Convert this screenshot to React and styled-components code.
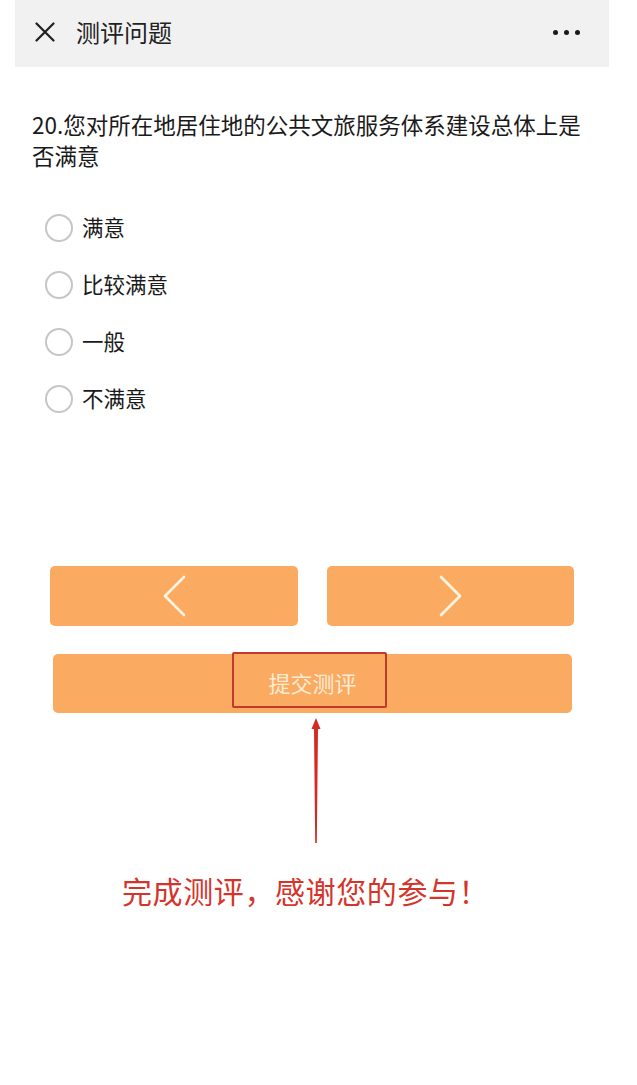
import React from 'react';
import styled, { createGlobalStyle } from 'styled-components';

const GlobalStyle = createGlobalStyle`
  html, body {
    margin: 0;
    padding: 0;
    background: #ffffff;
  }
  body {
    font-family: "Noto Sans CJK SC", "Noto Sans", sans-serif;
    color: #1c1c1c;
  }
`;

const Page = styled.div`
  width: 637px;
  min-height: 1085px;
  background: #fff;
`;

const TopBar = styled.div`
  margin: 0 28px 0 15px;
  height: 67px;
  background: #f1f1f1;
  display: flex;
  align-items: center;
  padding: 0 29px 3px 20px;
  box-sizing: border-box;
`;

const CloseIcon = styled.svg`
  width: 20px;
  height: 20px;
  flex-shrink: 0;
`;

const Title = styled.h1`
  margin: 0 0 0 21px;
  font-size: 24px;
  font-weight: 400;
  color: #222;
  line-height: 30px;
  flex: 1;
`;

const MoreDots = styled.div`
  display: flex;
  gap: 6px;
  span {
    width: 5px;
    height: 5px;
    border-radius: 50%;
    background: #1a1a1a;
  }
`;

const Question = styled.p`
  margin: 42px 0 0;
  padding: 0 45px 0 32px;
  font-size: 22.5px;
  line-height: 31px;
  color: #1a1a1a;
`;

const OptionList = styled.ul`
  list-style: none;
  margin: 28.5px 0 0;
  padding: 0 0 0 45px;
`;

const Option = styled.li`
  height: 57px;
  display: flex;
  align-items: center;
  gap: 9px;
  font-size: 21.5px;
  color: #1a1a1a;
  span:last-child {
    margin-top: -3px;
  }
`;

const Radio = styled.span`
  width: 28px;
  height: 28px;
  box-sizing: border-box;
  border: 2px solid #c6c6c6;
  border-radius: 50%;
  flex-shrink: 0;
`;

const NavRow = styled.div`
  margin: 138.5px 63px 0 50px;
  display: grid;
  grid-template-columns: 248px 247px;
  column-gap: 29px;
`;

const OrangeButton = styled.button`
  height: ${p => p.$h || 60}px;
  border: none;
  border-radius: 5px;
  background: #fbaa62;
  display: flex;
  align-items: center;
  justify-content: center;
  padding: 0;
  font-family: inherit;
  cursor: pointer;
  position: relative;
`;

const SubmitButton = styled(OrangeButton)`
  margin: 28px 65px 0 53px;
  width: 519px;
  padding-bottom: 4px;
  font-size: 22px;
  color: #fcecd4;
`;

const Highlight = styled.span`
  position: absolute;
  left: 179px;
  top: -2px;
  width: 155px;
  height: 56px;
  box-sizing: border-box;
  border: 2px solid #c23a2c;
  border-radius: 2px;
`;

const ArrowWrap = styled.div`
  display: flex;
  padding-left: 309px;
  margin-top: 5px;
`;

const Caption = styled.p`
  margin: 27px 0 0;
  padding-left: 122px;
  font-size: 30px;
  font-weight: 400;
  letter-spacing: 0.6px;
  line-height: 40px;
  color: #d5342b;
`;

const options = ['满意', '比较满意', '一般', '不满意'];

function Chevron({ dir }) {
  const pts = dir === 'left' ? '22,2 3,21 22,40' : '2,2 21,21 2,40';
  return (
    <svg width="24" height="42" viewBox="0 0 24 42">
      <polyline points={pts} fill="none" stroke="#fff4df" strokeWidth="2.6" strokeLinecap="round" strokeLinejoin="round" />
    </svg>
  );
}

export default function App() {
  return (
    <Page>
      <GlobalStyle />
      <TopBar>
        <CloseIcon viewBox="0 0 20 20">
          <path d="M1.5 1.5 L18.5 18.5 M18.5 1.5 L1.5 18.5" stroke="#1f1f1f" strokeWidth="2.2" strokeLinecap="round" />
        </CloseIcon>
        <Title>测评问题</Title>
        <MoreDots><span /><span /><span /></MoreDots>
      </TopBar>

      <Question>20.您对所在地居住地的公共文旅服务体系建设总体上是否满意</Question>

      <OptionList>
        {options.map(o => (
          <Option key={o}>
            <Radio />
            <span>{o}</span>
          </Option>
        ))}
      </OptionList>

      <NavRow>
        <OrangeButton aria-label="上一题"><Chevron dir="left" /></OrangeButton>
        <OrangeButton aria-label="下一题"><Chevron dir="right" /></OrangeButton>
      </NavRow>

      <SubmitButton $h={59}>
        提交测评
        <Highlight />
      </SubmitButton>

      <ArrowWrap>
        <svg width="14" height="125" viewBox="0 0 14 125">
          <polygon points="7,0 11.5,11 9,11 7.8,125 6.2,125 5,11 2.5,11" fill="#d42a22" />
        </svg>
      </ArrowWrap>

      <Caption>完成测评，感谢您的参与！</Caption>
    </Page>
  );
}
